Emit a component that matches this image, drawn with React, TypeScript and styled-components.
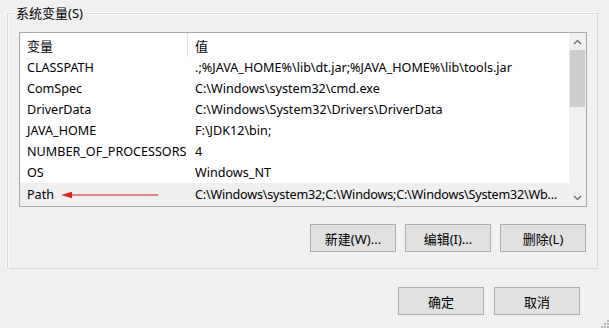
import React from "react";
import styled, { createGlobalStyle } from "styled-components";

interface EnvVar {
  name: string;
  value: string;
}

const vars: EnvVar[] = [
  { name: "CLASSPATH", value: ".;%JAVA_HOME%\\lib\\dt.jar;%JAVA_HOME%\\lib\\tools.jar" },
  { name: "ComSpec", value: "C:\\Windows\\system32\\cmd.exe" },
  { name: "DriverData", value: "C:\\Windows\\System32\\Drivers\\DriverData" },
  { name: "JAVA_HOME", value: "F:\\JDK12\\bin;" },
  { name: "NUMBER_OF_PROCESSORS", value: "4" },
  { name: "OS", value: "Windows_NT" },
  {
    name: "Path",
    value: "C:\\Windows\\system32;C:\\Windows;C:\\Windows\\System32\\Wb...",
  },
];

const App: React.FC = () => {
  return (
    <Page>
      <GlobalStyle />
      <Group>
        <Legend>系统变量(S)</Legend>
        <ListBox>
          <Table>
            <HeaderRow>
              <KeyCell header>变量</KeyCell>
              <ValueCell header>值</ValueCell>
            </HeaderRow>
            {vars.map((v) => (
              <Row key={v.name} selected={v.name === "Path"}>
                <KeyCell>{v.name}</KeyCell>
                <ValueCell tight={v.name === "Path"}>{v.value}</ValueCell>
                {v.name === "Path" && (
                  <Arrow width="100" height="10" viewBox="0 0 100 10">
                    <line x1="8" y1="5" x2="97" y2="5" stroke="#e0201c" strokeWidth="1.2" />
                    <polygon points="0,5 11,1.8 11,8.2" fill="#e0201c" />
                  </Arrow>
                )}
              </Row>
            ))}
          </Table>
          <ScrollBar>
            <ScrollArrow>
              <svg width="9" height="6" viewBox="0 0 9 6">
                <polyline points="1,5 4.5,1.5 8,5" fill="none" stroke="#606060" strokeWidth="1.2" />
              </svg>
            </ScrollArrow>
            <Track>
              <Thumb />
            </Track>
            <ScrollArrow>
              <svg width="9" height="6" viewBox="0 0 9 6">
                <polyline points="1,1 4.5,4.5 8,1" fill="none" stroke="#606060" strokeWidth="1.2" />
              </svg>
            </ScrollArrow>
          </ScrollBar>
        </ListBox>
        <ButtonRow>
          <Button>新建(W)...</Button>
          <Button>编辑(I)...</Button>
          <Button>删除(L)</Button>
        </ButtonRow>
      </Group>
      <DialogButtons>
        <Button>确定</Button>
        <Button>取消</Button>
      </DialogButtons>
      <Grip>
        <svg width="9" height="9" viewBox="0 0 9 9">
          <rect x="7" y="1" width="2" height="2" fill="#b8b8b8" />
          <rect x="4" y="4" width="2" height="2" fill="#b8b8b8" />
          <rect x="7" y="4" width="2" height="2" fill="#b8b8b8" />
          <rect x="1" y="7" width="2" height="2" fill="#b8b8b8" />
          <rect x="4" y="7" width="2" height="2" fill="#b8b8b8" />
          <rect x="7" y="7" width="2" height="2" fill="#b8b8b8" />
        </svg>
      </Grip>
    </Page>
  );
};

export default App;

const GlobalStyle = createGlobalStyle`
  html, body {
    margin: 0;
    padding: 0;
    background: #f0f0f0;
  }
  body {
    font-family: "Noto Sans", "Noto Sans CJK SC", sans-serif;
    font-size: 12.6px;
    color: #000;
  }
`;

const Page = styled.div`
  position: relative;
  width: 609px;
  height: 328px;
  overflow: hidden;
  padding: 13px 0 0 7px;
  box-sizing: border-box;
`;

const Group = styled.div`
  position: relative;
  width: 591px;
  height: 256px;
  box-sizing: border-box;
  border: 1px solid #d9d9d9;
  box-shadow: inset 1px 1px 0 #fbfbfb, -1px -1px 0 #fbfbfb;
  padding: 18px 10px 0 11px;
  display: flex;
  flex-direction: column;
`;

const Legend = styled.span`
  position: absolute;
  left: 6px;
  top: -9px;
  padding: 0 2px;
  background: #f0f0f0;
  line-height: 17px;
  font-size: 13px;
`;

const ListBox = styled.div`
  width: 568px;
  height: 175px;
  box-sizing: border-box;
  border: 1px solid #a8a8a8;
  background: #fff;
  display: flex;
`;

const Table = styled.div`
  flex: 1;
  display: flex;
  flex-direction: column;
  min-width: 0;
`;

const HeaderRow = styled.div`
  display: flex;
  height: 24px;
  align-items: stretch;
  font-size: 13px;
`;

const Row = styled.div<{ selected?: boolean }>`
  position: relative;
  display: flex;
  height: 21px;
  align-items: center;
  background: ${({ selected }) => (selected ? "#efefef" : "transparent")};
  flex: ${({ selected }) => (selected ? "1" : "none")};
`;

const KeyCell = styled.div<{ header?: boolean }>`
  width: 168px;
  flex: none;
  box-sizing: border-box;
  padding-left: 7px;
  white-space: nowrap;
  display: flex;
  align-items: center;
  border-right: ${({ header }) => (header ? "1px solid #e5e5e5" : "none")};
`;

const ValueCell = styled.div<{ header?: boolean; tight?: boolean }>`
  flex: 1;
  min-width: 0;
  padding-left: 7px;
  white-space: nowrap;
  overflow: hidden;
  display: flex;
  align-items: center;
  letter-spacing: ${({ tight }) => (tight ? "-0.2px" : "0")};
`;

const Arrow = styled.svg`
  position: absolute;
  left: 41px;
  top: 7px;
`;

const ScrollBar = styled.div`
  width: 17px;
  flex: none;
  background: #f0f0f0;
  display: flex;
  flex-direction: column;
`;

const ScrollArrow = styled.div`
  height: 17px;
  display: flex;
  align-items: center;
  justify-content: center;
`;

const Track = styled.div`
  flex: 1;
  padding: 0 1px;
`;

const Thumb = styled.div`
  height: 57px;
  background: #cdcdcd;
`;

const ButtonRow = styled.div`
  display: flex;
  justify-content: flex-end;
  gap: 9px;
  margin-top: 17px;
  padding-right: 1px;
`;

const Button = styled.button`
  width: 86px;
  height: 28px;
  box-sizing: border-box;
  background: #e1e1e1;
  border: 1px solid #adadad;
  border-radius: 0;
  font-family: "Noto Sans", "Noto Sans CJK SC", sans-serif;
  font-size: 13px;
  color: #000;
  padding: 0;
`;

const DialogButtons = styled.div`
  display: flex;
  justify-content: flex-end;
  gap: 10px;
  margin-top: 18px;
  padding-right: 29px;
`;

const Grip = styled.div`
  position: absolute;
  right: 0;
  bottom: 0;
  line-height: 0;
`;
